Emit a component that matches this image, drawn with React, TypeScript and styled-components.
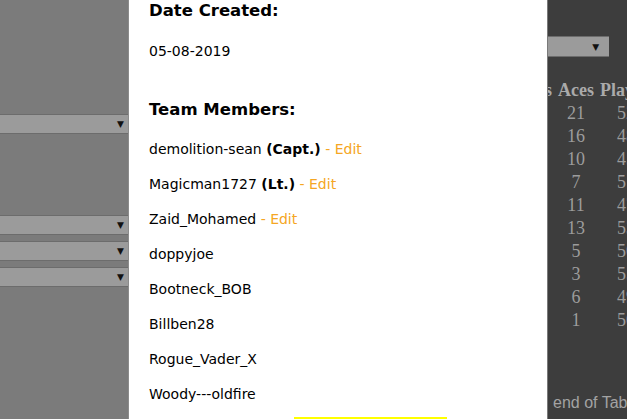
import { createGlobalStyle, styled } from 'styled-components';

const GlobalStyle = createGlobalStyle`
  html, body {
    margin: 0;
    padding: 0;
    overflow: hidden;
  }
`;

const Screen = styled.div`
  display: flex;
  height: 100vh;
  overflow: hidden;
  font-family: 'DejaVu Sans', Verdana, sans-serif;
`;

const LeftPane = styled.div`
  width: 128px;
  flex-shrink: 0;
  background: #7b7b7b;
  border-right: 1px solid #8c8c8c;
  padding-top: 114px;
  display: flex;
  flex-direction: column;
`;

const FakeSelect = styled.div<{ $gap?: number; $width?: number }>`
  box-sizing: border-box;
  height: 20px;
  margin-top: ${p => p.$gap ?? 0}px;
  width: ${p => (p.$width ? `${p.$width}px` : '100%')};
  background: #9b9b9b;
  border-top: 1px solid #6c6c6c;
  border-bottom: 1px solid #6c6c6c;
  display: flex;
  align-items: center;
  justify-content: flex-end;
  padding-right: 4px;
  font-size: 9px;
  color: #111;
`;

const Modal = styled.div`
  width: 398px;
  flex-shrink: 0;
  background: #fff;
  border-right: 1px solid #7a7a7a;
  padding-left: 20px;
  overflow: hidden;
  color: #000;
`;

const Heading = styled.h3<{ $top?: number }>`
  margin: ${p => p.$top ?? 0}px 0 0;
  font-size: 16.5px;
  line-height: 22px;
  font-weight: bold;
`;

const Text = styled.p<{ $top?: number }>`
  margin: ${p => p.$top ?? 16}px 0 0;
  font-size: 14px;
  line-height: 19px;
`;

const Rank = styled.b`
  font-weight: bold;
`;

const EditLink = styled.span`
  color: #f5a623;
  cursor: pointer;
`;

const ButtonRow = styled.div`
  margin-top: 13px;
  padding-left: 145px;
`;

const YellowButton = styled.button`
  width: 153px;
  height: 30px;
  border: none;
  background: #ffff00;
`;

const RightPane = styled.div`
  flex: 1;
  background: #3d3d3d;
  overflow: hidden;
  padding-top: 36px;
  display: flex;
  flex-direction: column;
`;

const StatsTable = styled.table`
  margin: 22px 0 0 -35px;
  border-collapse: collapse;
  font-family: 'Liberation Serif', 'Times New Roman', serif;
  font-size: 18px;
  white-space: nowrap;
`;

const Th = styled.th`
  padding: 0 3px;
  height: 23px;
  line-height: 23px;
  color: #aaaaaa;
  text-align: center;
`;

const Td = styled.td`
  padding: 0 3px;
  height: 23px;
  line-height: 23px;
  color: #9c9c9c;
  text-align: center;
`;

const TableEnd = styled.div`
  margin: 62px 0 0 5px;
  font-family: 'Liberation Sans', Arial, sans-serif;
  font-size: 16px;
  line-height: 18px;
  color: #a3a3a3;
  white-space: nowrap;
`;

const members = [
  { name: 'demolition-sean', rank: 'Capt.', edit: true },
  { name: 'Magicman1727', rank: 'Lt.', edit: true },
  { name: 'Zaid_Mohamed', edit: true },
  { name: 'doppyjoe' },
  { name: 'Bootneck_BOB' },
  { name: 'Billben28' },
  { name: 'Rogue_Vader_X' },
  { name: 'Woody---oldfire' },
];

const stats = [
  [34, 21, 52],
  [29, 16, 48],
  [22, 10, 45],
  [18, 7, 51],
  [25, 11, 47],
  [27, 13, 53],
  [12, 5, 50],
  [9, 3, 55],
  [14, 6, 49],
  [4, 1, 50],
];

export default function App() {
  return (
    <>
      <GlobalStyle />
      <Screen>
        <LeftPane>
          <FakeSelect>▼</FakeSelect>
          <FakeSelect $gap={81}>▼</FakeSelect>
          <FakeSelect $gap={6}>▼</FakeSelect>
          <FakeSelect $gap={6}>▼</FakeSelect>
        </LeftPane>

        <Modal>
          <Heading>Date Created:</Heading>
          <Text $top={20}>05-08-2019</Text>

          <Heading $top={38}>Team Members:</Heading>
          {members.map((m, i) => (
            <Text key={m.name} $top={i === 0 ? 19 : 16}>
              {m.name}
              {m.rank && (
                <>
                  {' '}
                  <Rank>({m.rank})</Rank>
                </>
              )}
              {m.edit && <EditLink> - Edit</EditLink>}
            </Text>
          ))}
          <ButtonRow>
            <YellowButton />
          </ButtonRow>
        </Modal>

        <RightPane>
          <FakeSelect $width={61} style={{ height: 21 }}>
            ▼&nbsp;&nbsp;
          </FakeSelect>
          <StatsTable>
            <thead>
              <tr>
                <Th>Kills</Th>
                <Th>Aces</Th>
                <Th>Played</Th>
              </tr>
            </thead>
            <tbody>
              {stats.map((row, i) => (
                <tr key={i}>
                  {row.map((v, j) => (
                    <Td key={j}>{v}</Td>
                  ))}
                </tr>
              ))}
            </tbody>
          </StatsTable>
          <TableEnd>end of Table</TableEnd>
        </RightPane>
      </Screen>
    </>
  );
}
